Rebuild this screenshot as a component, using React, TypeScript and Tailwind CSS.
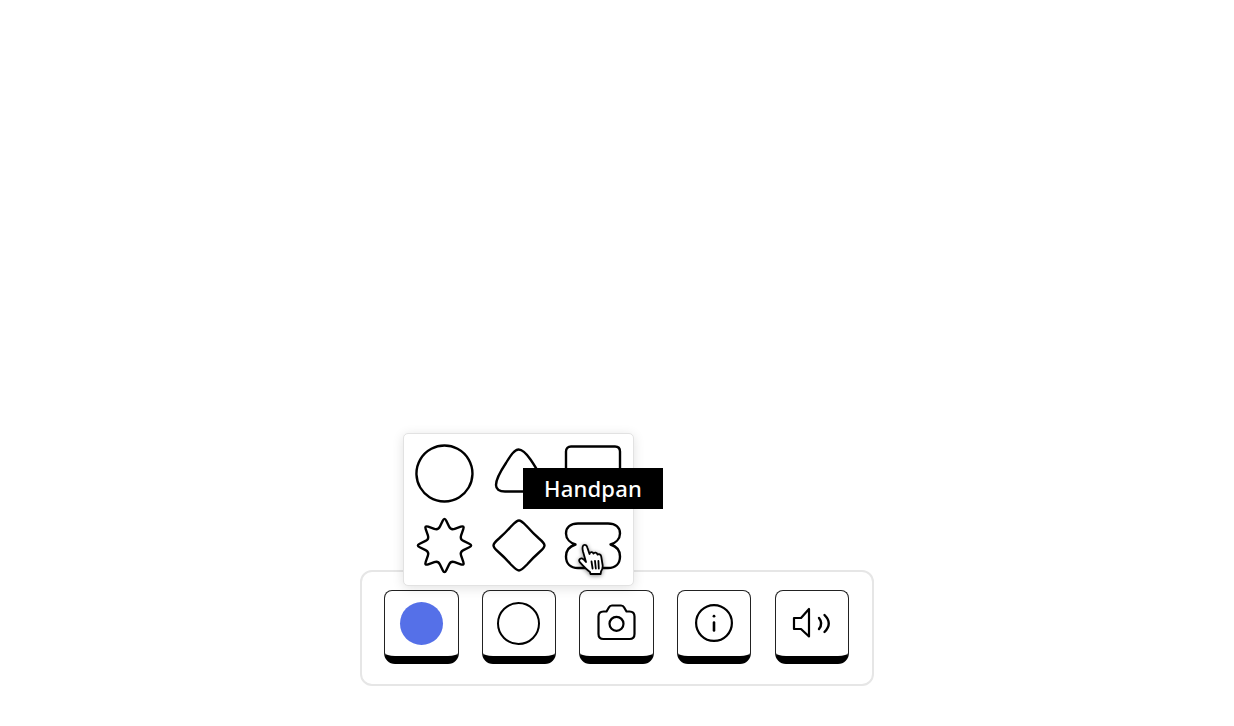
import React from 'react';

// rounds each corner of a closed polygon with a small quadratic curve
const roundedPoly = (pts: number[][], t: number) => {
  const f = (n: number) => n.toFixed(2);
  let d = '';
  pts.forEach((p, i) => {
    const prev = pts[(i + pts.length - 1) % pts.length];
    const next = pts[(i + 1) % pts.length];
    const ax = p[0] + (prev[0] - p[0]) * t;
    const ay = p[1] + (prev[1] - p[1]) * t;
    const bx = p[0] + (next[0] - p[0]) * t;
    const by = p[1] + (next[1] - p[1]) * t;
    d += `${i === 0 ? 'M' : 'L'}${f(ax)} ${f(ay)} Q${f(p[0])} ${f(p[1])} ${f(bx)} ${f(by)} `;
  });
  return d + 'Z';
};

const starPoints = Array.from({ length: 16 }, (_, i) => {
  const r = i % 2 === 0 ? 28.5 : 16.5;
  const a = (i * Math.PI) / 8 - Math.PI / 2;
  return [29.5 + r * Math.cos(a), 29.5 + r * Math.sin(a)];
});

const Shape = ({ d, active, label }: { d: string; active?: boolean; label?: string }) => (
  <div className="relative w-[60px] h-[60px]">
    <svg viewBox="0 0 60 60" className="w-[60px] h-[60px]" fill="none" stroke="#000" strokeWidth="2.4" strokeLinejoin="round">
      <path d={d} />
    </svg>
    {active && (
      <>
        <div className="absolute bottom-full left-1/2 -translate-x-1/2 mb-[7px] w-[140px] h-[41px] bg-black text-white flex items-center justify-center text-[22px] font-medium tracking-[0.2px] font-['Noto_Sans',sans-serif] z-20">
          {label}
        </div>
        <svg viewBox="0 0 30 34" className="absolute left-[14px] top-[25px] w-[30px] h-[34px] z-30 drop-shadow-[0_1px_2px_rgba(0,0,0,0.45)]" fill="#fff" stroke="#000" strokeWidth="1.8" strokeLinejoin="round" strokeLinecap="round">
          <path d="M9 21 L6 10.5 C5.4 8 4.8 5.5 6.5 4.2 C8.5 3.2 9.8 4.6 10.5 7 L12.5 13 C13 10.6 15.6 10.4 16.5 12.6 C17.4 11 19.8 11.2 20.6 13.6 C21.8 12.8 23.8 13.4 24.2 15.4 L25.6 24 C26 27 25 29 24 30.6 L23.6 33 L13.5 33 L13 31 C10 29 6.5 25.4 2.8 21.2 C1.4 19.4 2.6 17 4.8 17.4 C6.4 17.8 7.8 19.4 9 21 Z" />
          <path d="M14.5 20.5 L15.6 27.5 M18 20 L18.8 27.5 M21.4 20 L21.8 27.5" fill="none" />
        </svg>
      </>
    )}
  </div>
);

const shapes = [
  'M29.5 1.5 A28 28 0 1 1 29.4 1.5 Z',
  'M29.5 5.5 C33 5.5 37 9 41.5 15.5 C47 23.5 53 34 53 40 C53 46 49 47.5 42 47.5 L16 47.5 C10 47.5 7 45 7 41 C7 36 11 28 17 19 C21 12 25.5 5.5 29.5 5.5 Z',
  'M8 2.5 L52 2.5 C55 2.5 57 4.5 57 7.5 L57 52 C57 55 55 57 52 57 L8 57 C5 57 3 55 3 52 L3 7.5 C3 4.5 5 2.5 8 2.5 Z',
  roundedPoly(starPoints, 0.28),
  'M30 4.5 C32.5 4.5 35 7.5 38.5 11 C42 15 46 19 50 22.5 C53 25 55.5 27.5 55.5 29.5 C55.5 31.5 53 34 50 36.5 C46 40 42 44 38.5 48 C35 51.5 32.5 54.5 30 54.5 C27.5 54.5 25 51.5 21.5 48 C18 44 14 40 10 36.5 C7 34 4.5 31.5 4.5 29.5 C4.5 27.5 7 25 10 22.5 C14 19 18 15 21.5 11 C25 7.5 27.5 4.5 30 4.5 Z',
  'M15 7.5 L45 7.5 C52.5 7.5 57 11.5 57 17.5 C57 23 52.5 27 47.5 28.5 C52.5 30 57 34 57 40.5 C57 47.5 52.5 52 45 52 L15 52 C7.5 52 3 47.5 3 40.5 C3 34 7.5 30 12.5 28.5 C7.5 27 3 23 3 17.5 C3 11.5 7.5 7.5 15 7.5 Z',
];

const ToolButton = ({ children }: { children: React.ReactNode }) => (
  <button className="w-[74.5px] h-[74px] flex items-center justify-center bg-white border border-[#222] border-b-[8px] border-b-black rounded-t-[8px] rounded-b-[11px]">
    {children}
  </button>
);

const iconClass = 'w-[44px] h-[44px]';

const App = () => {
  return (
    <div className="w-full h-[726px] bg-white flex items-end justify-center pb-[40px]">
      <div className="relative w-[514px] h-[116px] flex items-center justify-between pl-[22px] pr-[23px] pb-[3px] border-2 border-[#e6e6e6] rounded-[12px] bg-white">
        <div className="absolute left-[41px] bottom-[98px] w-[231px] grid grid-cols-[60px_60px_60px] gap-x-[14px] gap-y-[12px] pt-[10px] pb-[9px] pl-[11px] bg-white border border-[#e2e2e2] rounded-[5px] shadow-[0_2px_12px_rgba(0,0,0,0.12)] z-10">
          {shapes.map((d, i) => (
            <Shape key={i} d={d} active={i === 5} label={i === 5 ? 'Handpan' : undefined} />
          ))}
        </div>

        <ToolButton>
          <div className="w-[43px] h-[43px] rounded-full bg-[#5570e8]" />
        </ToolButton>
        <ToolButton>
          <div className="w-[43px] h-[43px] rounded-full border-2 border-black" />
        </ToolButton>
        <ToolButton>
          <svg viewBox="0 0 44 44" className={iconClass} fill="none" stroke="#000" strokeWidth="2.2" strokeLinejoin="round" strokeLinecap="round">
            <path d="M8.5 10.5 H11.5 L14 6.3 C14.5 5 15.5 4.5 17 4.5 H26 C27.5 4.5 28.5 5 29 6.3 L31.5 10.5 H34.5 C37.5 10.5 39.5 12.5 39.5 15.5 V33 C39.5 36 37.5 38 34.5 38 H8.5 C5.5 38 3.5 36 3.5 33 V15.5 C3.5 12.5 5.5 10.5 8.5 10.5 Z" />
            <circle cx="21.5" cy="22.8" r="7" />
          </svg>
        </ToolButton>
        <ToolButton>
          <svg viewBox="0 0 44 44" className={iconClass} fill="none" stroke="#000" strokeWidth="2.2" strokeLinecap="round">
            <circle cx="22" cy="22" r="17.9" />
            <path d="M22 21.5 L22 29.5" strokeWidth="2.6" />
            <circle cx="22" cy="15.2" r="1.4" fill="#000" stroke="none" />
          </svg>
        </ToolButton>
        <ToolButton>
          <svg viewBox="0 0 44 44" className={iconClass} fill="none" stroke="#000" strokeWidth="2.2" strokeLinejoin="round" strokeLinecap="round">
            <path d="M4 17 L11 17 L19 8 L19 35.5 L11 28 L4 28 Z" />
            <path d="M29 17 Q33.4 22.4 29 28" strokeWidth="2.4" />
            <path d="M34.5 14 Q43 22.4 34.5 31" strokeWidth="2.4" />
          </svg>
        </ToolButton>
      </div>
    </div>
  );
};

export default App;
